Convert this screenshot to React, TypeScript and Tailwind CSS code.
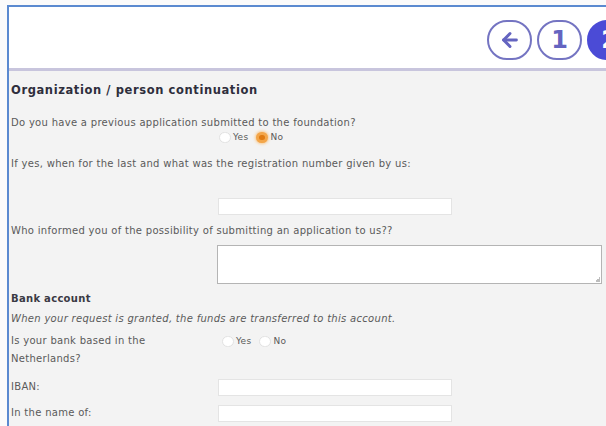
import { ArrowLeft } from "lucide-react";

const label = "text-[10px] leading-[12px] tracking-[0.3px] text-[#5a5a5a]";

function Radio({ checked }: { checked?: boolean }) {
  if (checked) {
    return (
      <span className="inline-flex h-[11px] w-[12px] items-center justify-center rounded-full bg-[#f3a64a] shadow-[0_0_3px_1px_#f8c88c]">
        <span className="h-[5px] w-[6px] rounded-full bg-[#e07a10]" />
      </span>
    );
  }
  return <span className="inline-block h-[11px] w-[12px] rounded-full border border-[#e2e2e2] bg-white" />;
}

function YesNo({ answer }: { answer?: "yes" | "no" }) {
  return (
    <div className="flex items-center gap-[2px] text-[9px] tracking-[0.3px] text-[#5a5a5a]">
      <Radio checked={answer === "yes"} />
      <span className="mr-[6px]">Yes</span>
      <Radio checked={answer === "no"} />
      <span>No</span>
    </div>
  );
}

function TextInput() {
  return <div className="h-[17px] w-[234px] border border-[#e4e4e4] bg-white" />;
}

function Step({ children, active }: { children: React.ReactNode; active?: boolean }) {
  return (
    <div
      className={
        active
          ? "flex h-[40px] w-[45px] shrink-0 items-center justify-center rounded-full border-2 border-[#4b4bd6] bg-[#4b4bd6] text-[24px] font-bold text-white"
          : "flex h-[40px] w-[45px] shrink-0 items-center justify-center rounded-full border-2 border-[#7474c2] bg-white text-[24px] font-bold text-[#6464c0]"
      }
    >
      {children}
    </div>
  );
}

export default function App() {
  return (
    <div className="h-[426px] w-[606px] overflow-hidden bg-[#fbfbfb] pl-[7px] pt-[5px] font-['DejaVu_Sans',Verdana,sans-serif]">
      <div className="h-full border-l-2 border-t-2 border-[#5b8ad0]">
        {/* header with the step indicator */}
        <div className="flex h-[61px] items-center justify-end gap-[5px] overflow-hidden bg-white pt-[4px]">
          <Step>
            <ArrowLeft className="h-[22px] w-[24px]" strokeWidth={3.2} />
          </Step>
          <Step>1</Step>
          <div className="w-[19px] overflow-hidden">
            <Step active>2</Step>
          </div>
        </div>
        <div className="h-[3px] bg-[#c8c5dd]" />

        <div className="h-full bg-[#f3f3f3] pl-[2px] pt-[12px]">
          <h2 className="h-[14px] text-[11.5px] leading-[14px] tracking-[0.6px] font-bold text-[#2e2e3c]">
            Organization / person continuation
          </h2>

          <p className={`mt-[20px] ${label}`}>Do you have a previous application submitted to the foundation?</p>
          <div className="mt-[2px] pl-[208px]">
            <YesNo answer="no" />
          </div>

          <p className={`mt-[13px] ${label}`}>
            If yes, when for the last and what was the registration number given by us:
          </p>
          <div className="mt-[28px] pl-[207px]">
            <TextInput />
          </div>

          <p className={`mt-[10px] ${label}`}>
            Who informed you of the possibility of submitting an application to us??
          </p>
          <div className="mt-[8px] pl-[206px]">
            <div className="relative h-[39px] w-[385px] border border-[#b4b4b4] bg-white">
              <span className="absolute right-[1px] bottom-[1px] size-[5px] bg-[linear-gradient(135deg,transparent_50%,#bdbdbd_50%)]" />
            </div>
          </div>

          <h3 className="mt-[9px] h-[12px] text-[10px] leading-[12px] tracking-[0.3px] font-bold text-[#3a3a44]">
            Bank account
          </h3>
          <p className={`mt-[8px] italic ${label}`}>
            When your request is granted, the funds are transferred to this account.
          </p>

          <div className="mt-[7px] flex">
            <p className="w-[207px] text-[10px] leading-[18px] tracking-[0.3px] text-[#5a5a5a]">
              Is your bank based in the
              <br />
              Netherlands?
            </p>
            <div className="pt-[3px] pl-[4px]">
              <YesNo />
            </div>
          </div>

          <div className="mt-[11px] flex items-center">
            <span className={`w-[207px] ${label}`}>IBAN:</span>
            <TextInput />
          </div>
          <div className="mt-[9px] flex items-center">
            <span className={`w-[207px] ${label}`}>In the name of:</span>
            <TextInput />
          </div>
        </div>
      </div>
    </div>
  );
}
